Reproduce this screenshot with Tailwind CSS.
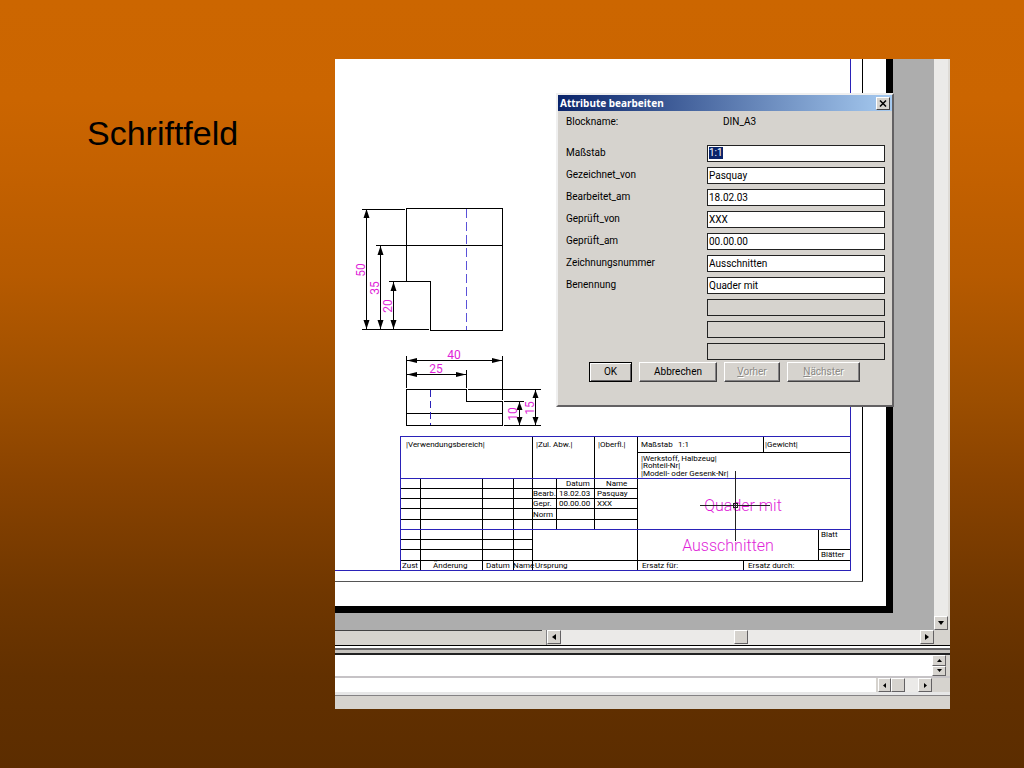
<!DOCTYPE html>
<html lang="de">

<head>
    <meta charset="UTF-8" />
    <meta name="viewport" content="width=device-width, initial-scale=1.0" />
    <title>Schriftfeld</title>
    <script src="https://cdn.jsdelivr.net/npm/@tailwindcss/browser@4"></script>
</head>

<body class="flex min-h-screen items-start bg-[linear-gradient(#cc6600_0%,#cb6500_13%,#c46100_22%,#b65a00_36%,#9c4e00_52%,#8a4300_62%,#703700_77%,#623000_88%,#5c2d00_100%)] pt-[59px] text-black">
    <h1 class="w-[335px] shrink-0 pt-[54px] pl-[87px] font-['Liberation_Sans',sans-serif] text-[34px] leading-[40px]">Schriftfeld</h1>

    <main class="w-full max-w-[615px] bg-[#d6d3ce] font-['Roboto',sans-serif]">
        <!-- Drawing area with vertical scrollbar -->
        <div class="flex">
            <div class="relative min-w-0 flex-1 bg-[#adadad]">
                <svg class="block w-full" viewBox="335 59 599 571" font-family="Roboto, sans-serif">
                    <!-- Sheet -->
                    <path d="M335 59H893V613H335Z" fill="#000" />
                    <path d="M335 59H886V606H335Z" fill="#fff" />

                    <g fill="none" stroke="#000" shape-rendering="crispEdges">
                        <path d="M862.5 59V581.5" />
                        <path d="M335 581.5H863" stroke="#555" />

                        <!-- Top view -->
                        <path d="M406.5 208.5H502.5V330.5H430.5V281.5H406.5Z" />
                        <path d="M376 245.5H502M362 209.5H405M362 329.5H429M389 281.5H406" />
                        <path d="M366.5 209V329M380.5 246V329M393.5 282V329" />

                        <!-- Front view -->
                        <path d="M406.5 389.5H466.5V401.5H502.5V425.5H406.5ZM406 413.5H502" />
                        <path d="M406.5 356V388M502.5 356V400M466.5 370V388" />
                        <path d="M407 360.5H502M407 374.5H466" />
                        <path d="M468 389.5H541M504 401.5H524M504 425.5H541M519.5 402V425M535.5 390V425" />

                        <!-- Title block, inner lines -->
                        <path d="M420.5 478V570M482.5 478V570M513.5 478V570M532.5 437V570M556.5 478V529M594.5 437V529M637.5 437V570" />
                        <path d="M401 488.5H638M401 498.5H638M401 508.5H638M401 519.5H638M401 539.5H532M401 549.5H532M401 560.5H850" />
                        <path d="M638 452.5H850M763.5 437V452M818.5 529V560M819 549.5H850M743.5 560V570" />
                    </g>

                    <!-- Arrow heads -->
                    <path d="M366.5 209l-3 9h6zM366.5 329l-3-9h6zM380.5 246l-3 9h6zM380.5 329l-3-9h6zM393.5 282l-3 9h6zM393.5 329l-3-9h6z
                        M407 360.5l10-2.5v5zM502 360.5l-10-2.5v5zM407 374.5l10-2.5v5zM466 374.5l-10-2.5v5z
                        M519.5 402l-3 8h6zM519.5 425l-3-8h6zM535.5 390l-3 8h6zM535.5 425l-3-8h6z" />

                    <g fill="none" stroke="#2a22b8" shape-rendering="crispEdges">
                        <path d="M466.5 209V330" stroke="#5a52d8" stroke-dasharray="9 4" />
                        <path d="M430.5 390V425" stroke-dasharray="7 4" />
                        <path d="M850.5 59V570.5H335M400.5 570V436.5H850M401 478.5H850M401 529.5H850" />
                    </g>

                    <g fill="#e01fd8" font-size="12" text-anchor="middle">
                        <text transform="translate(365 270) rotate(-90)">50</text>
                        <text transform="translate(379 288) rotate(-90)">35</text>
                        <text transform="translate(392 306) rotate(-90)">20</text>
                        <text x="454" y="359">40</text>
                        <text x="436" y="373">25</text>
                        <text transform="translate(517 414) rotate(-90)">10</text>
                        <text transform="translate(534 408) rotate(-90)">15</text>
                        <text x="743" y="511" font-size="16" font-weight="300">Quader mit</text>
                        <text x="728" y="551" font-size="16" font-weight="300">Ausschnitten</text>
                    </g>

                    <g font-size="8">
                        <text x="406" y="447">|Verwendungsbereich|</text>
                        <text x="536" y="447">|Zul. Abw.|</text>
                        <text x="598" y="447">|Oberfl.|</text>
                        <text x="641" y="447">Maßstab</text>
                        <text x="678" y="447">1:1</text>
                        <text x="765" y="447">|Gewicht|</text>
                        <text x="641" y="461">|Werkstoff, Halbzeug|</text>
                        <text x="641" y="468">|Rohteil-Nr|</text>
                        <text x="641" y="476">|Modell- oder Gesenk-Nr|</text>
                        <text x="566" y="486">Datum</text>
                        <text x="606" y="486">Name</text>
                        <text x="533" y="496">Bearb.</text>
                        <text x="559" y="496">18.02.03</text>
                        <text x="597" y="496">Pasquay</text>
                        <text x="533" y="506">Gepr.</text>
                        <text x="559" y="506">00.00.00</text>
                        <text x="597" y="506">XXX</text>
                        <text x="533" y="517">Norm</text>
                        <text x="821" y="537">Blatt</text>
                        <text x="821" y="557">Blätter</text>
                        <text x="402" y="568">Zust</text>
                        <text x="433" y="568">Änderung</text>
                        <text x="486" y="568">Datum</text>
                        <text x="513" y="568">Name</text>
                        <text x="535" y="568">Ursprung</text>
                        <text x="642" y="568">Ersatz für:</text>
                        <text x="748" y="568">Ersatz durch:</text>
                    </g>

                    <!-- Crosshair -->
                    <path d="M700 505.5H770M735.5 471V541M733.5 503.5h4v4h-4z" fill="none" stroke="#222" shape-rendering="crispEdges" />
                </svg>

                <!-- Attribute dialog -->
                <form role="dialog" aria-labelledby="dialogTitle" onsubmit="return false"
                    class="absolute top-[34px] left-[221px] h-[314px] w-[338px] border-2 border-t-[#efefef] border-r-[#636163] border-b-[#636163] border-l-[#efefef] bg-[#d6d3ce] text-[10px] leading-[12px]">
                    <div class="flex h-4 items-center justify-between bg-linear-to-r/srgb from-[#0a246a] to-[#a6caf0] pr-[2px] pl-0.5">
                        <h2 id="dialogTitle" class="font-['Noto_Sans',sans-serif] font-bold text-white">Attribute bearbeiten</h2>
                        <button type="button" aria-label="Schließen"
                            class="flex h-[13px] w-[14px] items-center justify-center border border-t-white border-r-[#424142] border-b-[#424142] border-l-white bg-[#d6d3ce]">
                            <svg class="h-[7px] w-2" viewBox="0 0 8 7" stroke="#000" stroke-width="1.5" fill="none">
                                <path d="M1 0.5L7 6.5M7 0.5L1 6.5" />
                            </svg>
                        </button>
                    </div>

                    <div class="flex h-[31px] pt-[5px] pl-2">
                        <span class="w-[157px]">Blockname:</span>
                        <span>DIN_A3</span>
                    </div>

                    <div class="grid grid-cols-[141px_1fr] auto-rows-[22px] items-center pr-[7px] pl-2">
                        <label for="scale">Maßstab</label>
                        <div class="flex h-[17px] items-center border border-[#222] bg-white pl-px">
                            <input id="scale" value="1:1" class="w-[14px] bg-[#0a246a] text-white outline-none" />
                        </div>
                        <label for="drawnBy">Gezeichnet_von</label>
                        <input id="drawnBy" value="Pasquay" class="h-[17px] min-w-0 border border-[#222] bg-white px-px" />
                        <label for="editedOn">Bearbeitet_am</label>
                        <input id="editedOn" value="18.02.03" class="h-[17px] min-w-0 border border-[#222] bg-white px-px" />
                        <label for="checkedBy">Geprüft_von</label>
                        <input id="checkedBy" value="XXX" class="h-[17px] min-w-0 border border-[#222] bg-white px-px" />
                        <label for="checkedOn">Geprüft_am</label>
                        <input id="checkedOn" value="00.00.00" class="h-[17px] min-w-0 border border-[#222] bg-white px-px" />
                        <label for="number">Zeichnungsnummer</label>
                        <input id="number" value="Ausschnitten" class="h-[17px] min-w-0 border border-[#222] bg-white px-px" />
                        <label for="name">Benennung</label>
                        <input id="name" value="Quader mit" class="h-[17px] min-w-0 border border-[#222] bg-white px-px" />
                        <input disabled aria-label="Attribut 8" class="col-start-2 h-[17px] min-w-0 border border-[#222]" />
                        <input disabled aria-label="Attribut 9" class="col-start-2 h-[17px] min-w-0 border border-[#222]" />
                        <input disabled aria-label="Attribut 10" class="col-start-2 h-[17px] min-w-0 border border-[#222]" />
                    </div>

                    <div class="flex gap-[7px] pl-[31px]">
                        <button type="submit" class="h-5 w-[43px] border border-black shadow-[inset_1px_1px_#fff,inset_-1px_-1px_#636163]">OK</button>
                        <button type="button" class="h-5 w-[78px] border border-t-white border-r-[#424142] border-b-[#424142] border-l-white shadow-[inset_-1px_-1px_#848284]">Abbrechen</button>
                        <button type="button" disabled class="h-5 w-[56px] border border-t-white border-r-[#424142] border-b-[#424142] border-l-white text-[#8c8a86] shadow-[inset_-1px_-1px_#848284] text-shadow-[1px_1px_#fff]"><u>V</u>orher</button>
                        <button type="button" disabled class="h-5 w-[73px] border border-t-white border-r-[#424142] border-b-[#424142] border-l-white text-[#8c8a86] shadow-[inset_-1px_-1px_#848284] text-shadow-[1px_1px_#fff]"><u>N</u>ächster</button>
                    </div>
                </form>
            </div>
            <div class="flex w-4 flex-col justify-end border-r-2 border-[#dedbd6] bg-[#ebeae8]">
                <button aria-label="Nach unten" class="flex h-[14px] items-center justify-center border border-t-white border-r-[#636163] border-b-[#636163] border-l-white bg-[#d6d3ce]">
                    <svg class="h-1 w-[6px]" viewBox="0 0 6 4"><path d="M0 0H6L3 4Z" /></svg>
                </button>
            </div>
        </div>

        <!-- Horizontal scrollbar -->
        <div class="flex h-[15px] pr-4">
            <div class="w-[207px] border-t border-[#424142]"></div>
            <div class="w-[5px] border-r border-[#848284]"></div>
            <button aria-label="Nach links" class="flex h-[14px] w-[14px] items-center justify-center border border-t-white border-r-[#636163] border-b-[#636163] border-l-white">
                <svg class="h-[6px] w-1" viewBox="0 0 4 6"><path d="M4 0V6L0 3Z" /></svg>
            </button>
            <div class="flex flex-1 bg-[#ebeae8] pl-[173px]">
                <div class="h-[14px] w-[14px] border border-t-white border-r-[#636163] border-b-[#636163] border-l-white bg-[#d6d3ce]"></div>
            </div>
            <button aria-label="Nach rechts" class="flex h-[14px] w-[14px] items-center justify-center border border-t-white border-r-[#636163] border-b-[#636163] border-l-white">
                <svg class="h-[6px] w-1" viewBox="0 0 4 6"><path d="M0 0V6L4 3Z" /></svg>
            </button>
        </div>

        <!-- Splitter -->
        <div class="h-[10px] border-t border-b-2 border-t-black border-b-[#222] bg-white pt-[2px]">
            <div class="h-[5px] border-t-2 border-[#636163] bg-[#c6c3be]"></div>
        </div>

        <!-- Command line -->
        <div class="flex h-[23px] border-b-2 border-[#c6c3c6] bg-white">
            <div class="flex-1"></div>
            <div class="flex w-[14px] flex-col">
                <button aria-label="Zeile nach oben" class="flex flex-1 items-center justify-center border border-t-white border-r-[#636163] border-b-[#636163] border-l-white bg-[#d6d3ce]">
                    <svg class="h-[3px] w-[5px]" viewBox="0 0 5 3"><path d="M0 3H5L2.5 0Z" /></svg>
                </button>
                <button aria-label="Zeile nach unten" class="flex flex-1 items-center justify-center border border-t-white border-r-[#636163] border-b-[#636163] border-l-white bg-[#d6d3ce]">
                    <svg class="h-[3px] w-[5px]" viewBox="0 0 5 3"><path d="M0 0H5L2.5 3Z" /></svg>
                </button>
            </div>
            <div class="w-1 bg-[#d6d3ce]"></div>
        </div>
        <div class="flex h-[14px] pr-[18px]">
            <div class="flex-1 bg-white"></div>
            <div class="w-[2px]"></div>
            <button aria-label="Befehl nach links" class="flex w-[13px] items-center justify-center border border-t-white border-r-[#636163] border-b-[#636163] border-l-white">
                <svg class="h-[5px] w-[3px]" viewBox="0 0 3 5"><path d="M3 0V5L0 2.5Z" /></svg>
            </button>
            <div class="w-[14px] border border-t-white border-r-[#636163] border-b-[#636163] border-l-white"></div>
            <div class="w-[13px] bg-[#ebeae8]"></div>
            <button aria-label="Befehl nach rechts" class="flex w-[14px] items-center justify-center border border-t-white border-r-[#636163] border-b-[#636163] border-l-white">
                <svg class="h-[5px] w-[3px]" viewBox="0 0 3 5"><path d="M0 0V5L3 2.5Z" /></svg>
            </button>
        </div>

        <!-- Status bar -->
        <div class="h-[17px] border-t-[3px] border-[#e7e7e7]">
            <div class="border-t border-[#848284]"></div>
        </div>
    </main>
</body>

</html>
